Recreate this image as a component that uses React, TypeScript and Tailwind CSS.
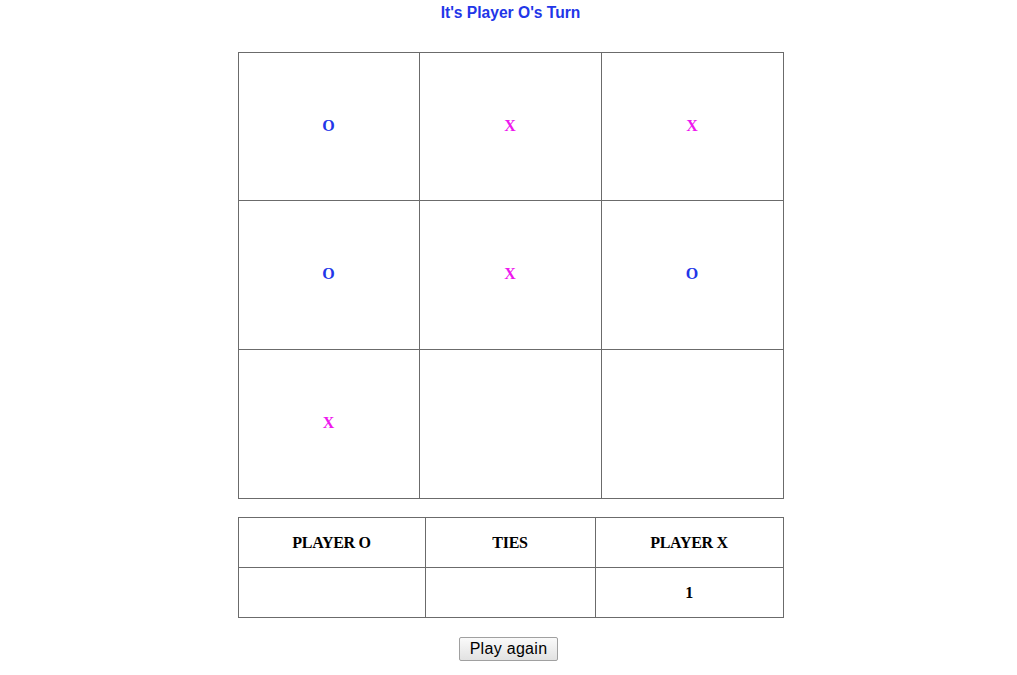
const board = ['O', 'X', 'X', 'O', 'X', 'O', 'X', '', '']

function Mark({ value }: { value: string }) {
  if (!value) return null
  return (
    <span
      className={`-mt-[2px] font-['Liberation_Serif',serif] text-[16px] font-bold ${
        value === 'O' ? 'text-[#2236e8]' : 'text-[#ee18ee]'
      }`}
    >
      {value}
    </span>
  )
}

export default function App() {
  return (
    <div className="flex min-h-[675px] w-full flex-col items-center bg-white">
      <h1 className="mt-[3px] ml-[4px] h-[20px] font-['Liberation_Sans',sans-serif] text-[15.6px] leading-[20px] font-bold text-[#2236e8]">
        It's Player O's Turn
      </h1>

      {/* game board */}
      <div className="mt-[29px] ml-[4px] grid grid-cols-[181px_182px_182px] grid-rows-[148px_149px_149px] border-t border-l border-[#6b6b6b]">
        {board.map((cell, i) => (
          <div
            key={i}
            className="flex items-center justify-center border-r border-b border-[#6b6b6b]"
          >
            <Mark value={cell} />
          </div>
        ))}
      </div>

      {/* score table */}
      <div className="mt-[18px] ml-[4px] grid grid-cols-[187px_170px_188px] grid-rows-[50px_50px] border-t border-l border-[#6b6b6b] font-['Liberation_Serif',serif] text-[16px] font-bold tracking-[-0.3px] text-black">
        <div className="flex items-center justify-center border-r border-b border-[#6b6b6b]">PLAYER O</div>
        <div className="flex items-center justify-center border-r border-b border-[#6b6b6b]">TIES</div>
        <div className="flex items-center justify-center border-r border-b border-[#6b6b6b]">PLAYER X</div>
        <div className="flex items-center justify-center border-r border-b border-[#6b6b6b]"></div>
        <div className="flex items-center justify-center border-r border-b border-[#6b6b6b]"></div>
        <div className="flex items-center justify-center border-r border-b border-[#6b6b6b]">1</div>
      </div>

      <button className="mt-[19px] h-[24px] w-[99px] rounded-[2px] border border-[#a0a0a0] bg-gradient-to-b from-[#fafafa] to-[#e2e2e2] font-['Liberation_Sans',sans-serif] text-[16px] leading-[20px] tracking-[0.3px] text-black">
        Play again
      </button>
    </div>
  )
}
